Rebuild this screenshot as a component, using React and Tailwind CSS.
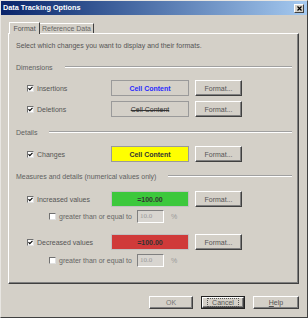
const font = { fontFamily: '"Liberation Sans", Arial, sans-serif' };

function Check({ checked }) {
  return (
    <div className="w-[7px] h-[7px] bg-white border border-t-[#707070] border-l-[#707070] border-b-[#e0e0e0] border-r-[#e0e0e0] flex items-center justify-center shrink-0">
      {checked && (
        <svg width="5" height="5" viewBox="0 0 5 5">
          <path d="M0.5 2.2 L1.8 3.6 L4.5 0.8" stroke="#000" strokeWidth="1.1" fill="none" />
        </svg>
      )}
    </div>
  );
}

function Btn({ children, className = "" }) {
  return (
    <div
      className={`flex items-center justify-center bg-[#d4d0c8] border border-t-white border-l-white border-b-[#404040] border-r-[#404040] shadow-[inset_-1px_-1px_0_#808080] text-[#555] ${className}`}
    >
      {children}
    </div>
  );
}

function Section({ label }) {
  return (
    <div className="flex items-center h-[10px] text-[#606060]">
      <span className="shrink-0">{label}</span>
      <div className="flex-1 ml-[12px] mr-[6px] h-[2px] border-t border-t-[#a0a0a0] border-b border-b-white"></div>
    </div>
  );
}

function ItemRow({ label, children, mt }) {
  return (
    <div className={`flex items-center h-[16px] ${mt}`}>
      <div className="ml-[11px]"></div>
      <Check checked />
      <span className="ml-[3px] w-[74px] text-[#555]">{label}</span>
      {children}
      <Btn className="w-[47px] h-[16px] ml-[6px]">Format...</Btn>
    </div>
  );
}

function Sample({ bg, children, className = "" }) {
  return (
    <div className={`w-[78px] h-[16px] flex items-center justify-center font-bold border border-[#9a9a9a] ${bg} ${className}`}>
      {children}
    </div>
  );
}

function Threshold({ mt }) {
  return (
    <div className={`flex items-center h-[13px] ${mt}`}>
      <div className="ml-[33px]"></div>
      <Check />
      <span className="ml-[3px] w-[78px] text-[#666]">greater than or equal to</span>
      <div className="w-[27px] h-[13px] border border-t-[#808080] border-l-[#808080] border-b-white border-r-white bg-[#d8d5d0] flex items-center pl-[2px] text-[#999]" style={{ fontFamily: '"Liberation Serif", serif' }}>
        10.0
      </div>
      <span className="ml-[7px] text-[#999]">%</span>
    </div>
  );
}

export default function App() {
  return (
    <div className="w-[308px] h-[320px] bg-white" style={font}>
      <div className="w-[308px] h-[318px] bg-[#d4d0c8] border border-t-[#e8e6e2] border-l-[#e8e6e2] border-b-[#404040] border-r-[#404040] flex flex-col text-[7px] leading-none">
        {/* title bar */}
        <div className="h-[14px] flex items-center justify-between bg-gradient-to-r from-[#0a246a] to-[#a6caf0] pl-[2px] pr-[3px]">
          <span className="text-white font-bold text-[7.3px]">Data Tracking Options</span>
          <div className="w-[10px] h-[9px] bg-[#d4d0c8] border border-t-white border-l-white border-b-[#404040] border-r-[#404040] flex items-center justify-center">
            <svg width="5" height="5" viewBox="0 0 5 5">
              <path d="M0.5 0.5 L4.5 4.5 M4.5 0.5 L0.5 4.5" stroke="#000" strokeWidth="1.2" />
            </svg>
          </div>
        </div>

        {/* tabs */}
        <div className="flex items-end h-[12px] mt-[6px] ml-[8px] relative z-10">
          <div className="h-[12px] w-[31px] flex items-center justify-center bg-[#d4d0c8] border border-b-0 border-t-white border-l-white border-r-[#404040] text-[#555] -mb-[1px] pb-[1px]">
            Format
          </div>
          <div className="h-[10px] w-[54px] flex items-center justify-center border border-b-0 border-t-white border-l-0 border-r-[#404040] text-[#666]">
            Reference Data
          </div>
        </div>

        {/* panel */}
        <div className="ml-[7px] w-[291px] h-[251px] border border-t-white border-l-white border-b-[#404040] border-r-[#404040] shadow-[inset_-1px_-1px_0_#808080] flex flex-col pl-[7px] pt-[6px]">
          <div className="h-[10px] flex items-center text-[#555]">
            Select which changes you want to display and their formats.
          </div>

          <div className="mt-[12px]">
            <Section label="Dimensions" />
          </div>
          <ItemRow label="Insertions" mt="mt-[8px]">
            <Sample bg="bg-[#d4d0c8]" className="text-[#2a2aff]">Cell Content</Sample>
          </ItemRow>
          <ItemRow label="Deletions" mt="mt-[5px]">
            <Sample bg="bg-[#d4d0c8]" className="text-[#333] line-through font-normal">Cell Content</Sample>
          </ItemRow>

          <div className="mt-[10px]">
            <Section label="Details" />
          </div>
          <ItemRow label="Changes" mt="mt-[9px]">
            <Sample bg="bg-[#ffff00]" className="text-[#333]">Cell Content</Sample>
          </ItemRow>

          <div className="mt-[9px]">
            <Section label="Measures and details (numerical values only)" />
          </div>
          <ItemRow label="Increased values" mt="mt-[10px]">
            <Sample bg="bg-[#3cc83c]" className="text-[#333] border-[#c0c0c0]">=100.00</Sample>
          </ItemRow>
          <Threshold mt="mt-[3px]" />
          <ItemRow label="Decreased values" mt="mt-[11px]">
            <Sample bg="bg-[#d03a3a]" className="text-[#333] border-[#c0c0c0]">=100.00</Sample>
          </ItemRow>
          <Threshold mt="mt-[4px]" />
        </div>

        {/* buttons */}
        <div className="flex justify-end gap-[8px] mt-[12px] pr-[8px]">
          <Btn className="w-[44px] h-[13px] text-[#777]">OK</Btn>
          <div className="w-[44px] h-[13px] border border-[#222] flex">
            <Btn className="flex-1 text-[#555]">
              <span className="px-[4px] outline outline-1 outline-dotted outline-[#555]">Cancel</span>
            </Btn>
          </div>
          <Btn className="w-[46px] h-[13px] text-[#555]">
            <span><span className="underline">H</span>elp</span>
          </Btn>
        </div>
      </div>
    </div>
  );
}
